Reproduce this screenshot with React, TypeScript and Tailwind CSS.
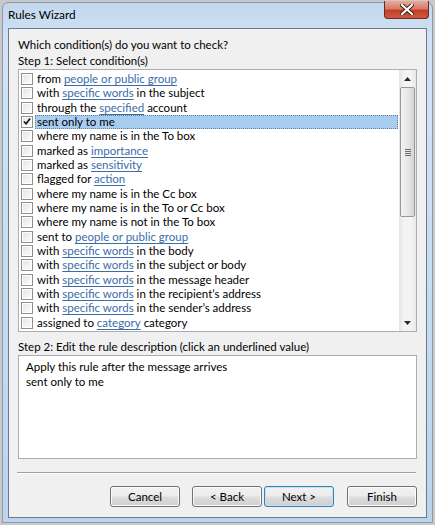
import React from 'react'

type Part = { t: string; link?: boolean }

const rows: Part[][] = [
  [{ t: 'from ' }, { t: 'people or public group', link: true }],
  [{ t: 'with ' }, { t: 'specific words', link: true }, { t: ' in the subject' }],
  [{ t: 'through the ' }, { t: 'specified', link: true }, { t: ' account' }],
  [{ t: 'sent only to me' }],
  [{ t: 'where my name is in the To box' }],
  [{ t: 'marked as ' }, { t: 'importance', link: true }],
  [{ t: 'marked as ' }, { t: 'sensitivity', link: true }],
  [{ t: 'flagged for ' }, { t: 'action', link: true }],
  [{ t: 'where my name is in the Cc box' }],
  [{ t: 'where my name is in the To or Cc box' }],
  [{ t: 'where my name is not in the To box' }],
  [{ t: 'sent to ' }, { t: 'people or public group', link: true }],
  [{ t: 'with ' }, { t: 'specific words', link: true }, { t: ' in the body' }],
  [{ t: 'with ' }, { t: 'specific words', link: true }, { t: ' in the subject or body' }],
  [{ t: 'with ' }, { t: 'specific words', link: true }, { t: ' in the message header' }],
  [{ t: 'with ' }, { t: 'specific words', link: true }, { t: ' in the recipient\u2019s address' }],
  [{ t: 'with ' }, { t: 'specific words', link: true }, { t: ' in the sender\u2019s address' }],
  [{ t: 'assigned to ' }, { t: 'category', link: true }, { t: ' category' }],
]

const SELECTED = 3

function CheckBox({ checked }: { checked?: boolean }) {
  return (
    <div className="w-[12px] h-[12px] shrink-0 border border-[#8e8f8f] bg-white flex items-center justify-center">
      <div className="w-[8px] h-[8px] bg-gradient-to-br from-[#e6e6e6] to-[#fbfbfb] flex items-center justify-center">
        {checked && (
          <svg width="9" height="9" viewBox="0 0 9 9" className="-mt-[1px]">
            <path d="M1 4.5 L3.5 7 L8 1.2" fill="none" stroke="#111" strokeWidth="1.8" />
          </svg>
        )}
      </div>
    </div>
  )
}

function Button({ label, primary }: { label: string; primary?: boolean }) {
  return (
    <div
      className={`w-[70px] h-[21px] rounded-[3px] border flex items-center justify-center text-[11.5px] text-black ${
        primary ? 'border-[#3c7fb1] shadow-[inset_0_0_0_1px_#bfe3f7]' : 'border-[#707070] shadow-[inset_0_0_0_1px_#fcfcfc]'
      } bg-[linear-gradient(#f2f2f2_0%,#ebebeb_48%,#dddddd_52%,#cfcfcf_100%)]`}
    >
      {label}
    </div>
  )
}

function ScrollBar() {
  return (
    <div className="w-[17px] h-full flex flex-col bg-[linear-gradient(90deg,#e4e4e4,#f4f4f4_30%,#f4f4f4_70%,#e8e8e8)]">
      <div className="h-[17px] flex items-center justify-center">
        <svg width="7" height="4" viewBox="0 0 7 4">
          <path d="M0 4 L3.5 0 L7 4 Z" fill="#2b2b2b" />
        </svg>
      </div>
      <div className="mx-[1px] h-[130px] rounded-[2px] border border-[#979797] bg-[linear-gradient(90deg,#f2f2f2,#e6e6e6_50%,#d6d6d6)] flex items-center justify-center">
        <div className="flex flex-col gap-[1px]">
          <div className="w-[6px] h-[1px] bg-[#6d6d6d]" />
          <div className="w-[6px] h-[1px] bg-[#6d6d6d]" />
          <div className="w-[6px] h-[1px] bg-[#6d6d6d]" />
          <div className="w-[6px] h-[1px] bg-[#6d6d6d]" />
        </div>
      </div>
      <div className="flex-1" />
      <div className="h-[17px] flex items-center justify-center">
        <svg width="7" height="4" viewBox="0 0 7 4">
          <path d="M0 0 L3.5 4 L7 0 Z" fill="#2b2b2b" />
        </svg>
      </div>
    </div>
  )
}

export default function App() {
  return (
    <div
      className="w-[435px] h-[525px] bg-[#c9c9c9] p-[2px] pb-[2px]"
      style={{ fontFamily: 'Lato, "Noto Sans", sans-serif' }}
    >
      <div className="w-full h-full rounded-t-[6px] border border-[#8a9bb0] bg-[linear-gradient(180deg,#c2d7ee_0%,#d3e3f4_8%,#c6dbf1_60%,#bcd3ec_100%)] flex flex-col">
        <div className="h-[25px] flex items-start justify-between pl-[5px] pr-[3px]">
          <div className="pt-[4px] text-[11.8px] text-black leading-[16px]">Rules Wizard</div>
          <div className="-mt-[2px] w-[45px] h-[18px] rounded-b-[4px] border border-[#6d2a20] border-t-0 bg-[linear-gradient(180deg,#e9a99a_0%,#d87b66_45%,#c23f26_55%,#cf5a3f_100%)] flex items-center justify-center">
            <svg width="14" height="11" viewBox="0 0 14 11">
              <path d="M2 1 L12 10 M12 1 L2 10" stroke="#3a1a14" strokeWidth="4" strokeLinecap="square" />
              <path d="M2 1 L12 10 M12 1 L2 10" stroke="#ffffff" strokeWidth="2.2" strokeLinecap="square" />
            </svg>
          </div>
        </div>
        <div className="mx-[5px] mb-[4px] flex-1 border border-[#6b7a8c] bg-[#f0f0f0] flex flex-col px-[9px] text-[11.5px] text-black">
          <div className="pt-[8px] leading-[16px]">Which condition(s) do you want to check?</div>
          <div className="leading-[16px]">Step 1: Select condition(s)</div>
          <div className="h-[263px] border border-[#abadb3] bg-white flex">
            <div className="flex-1 pt-[2px] pl-[2px] pr-[1px]">
              {rows.map((parts, i) => (
                <div key={i} className="h-[14.33px] flex items-center">
                  <CheckBox checked={i === SELECTED} />
                  <div
                    className={`ml-[2px] pl-[2px] h-full flex-1 flex items-center whitespace-nowrap leading-[14px] ${
                      i === SELECTED ? 'bg-[#a8cdf0] outline outline-1 outline-dotted outline-[#6b7f95] -outline-offset-1' : ''
                    }`}
                  >
                    {parts.map((p, j) =>
                      p.link ? (
                        <span key={j} className="text-[#3a6ca8] underline underline-offset-[2px] decoration-[#3a6ca8]">
                          {p.t}
                        </span>
                      ) : (
                        <span key={j} className="whitespace-pre">{p.t}</span>
                      )
                    )}
                  </div>
                </div>
              ))}
            </div>
            <ScrollBar />
          </div>
          <div className="mt-[7px] leading-[16px]">Step 2: Edit the rule description (click an underlined value)</div>
          <div className="h-[104px] border border-[#abadb3] bg-white pt-[3px] pl-[7px] leading-[15px]">
            <div>Apply this rule after the message arrives</div>
            <div>sent only to me</div>
          </div>
          <div className="mt-[13px] mr-[1px] -ml-[1px] border-t border-[#a0a0a0] border-b border-b-white" />
          <div className="mt-[12px] flex justify-end">
            <Button label="Cancel" />
            <div className="w-[12px]" />
            <Button label="< Back" />
            <div className="w-[2px]" />
            <Button label="Next >" primary />
            <div className="w-[13px]" />
            <Button label="Finish" />
          </div>
        </div>
      </div>
    </div>
  )
}
